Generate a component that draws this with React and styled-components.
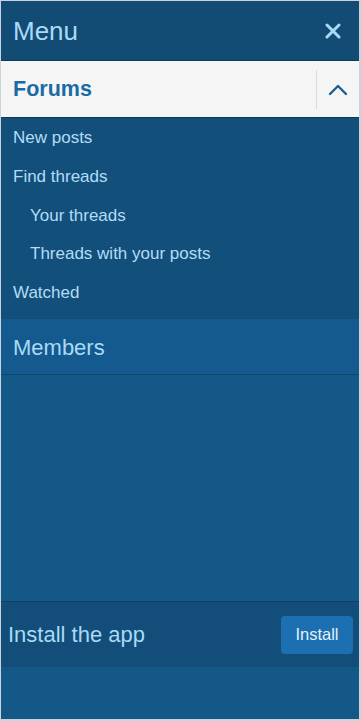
import React from "react";
import styled, { createGlobalStyle } from "styled-components";

const Global = createGlobalStyle`
  html, body { margin: 0; padding: 0; background: #c9d3dc; }
  body { font-family: "Liberation Sans", Arial, sans-serif; }
`;

const Frame = styled.div`
  box-sizing: border-box;
  width: 361px;
  height: 721px;
  border: 1px solid #c9d3dc;
  border-right-width: 2px;
  border-bottom-width: 2px;
  background: #135887;
  display: flex;
  flex-direction: column;
  overflow: hidden;
`;

const Header = styled.div`
  height: 59px;
  display: flex;
  align-items: center;
  justify-content: space-between;
  padding: 0 16px 0 12px;
  background: #124c75;
  border-bottom: 1px solid #0d3b5c;
`;

const Title = styled.div`
  color: #a9daf7;
  font-size: 26px;
  padding-top: 1px;
`;

const Close = styled.button`
  border: 0;
  background: none;
  padding: 0;
  width: 20px;
  height: 24px;
  display: flex;
  align-items: center;
  justify-content: center;
`;

const SectionHead = styled.div`
  height: 56px;
  display: flex;
  align-items: stretch;
  background: #f5f5f5;
  border-bottom: 1px solid #0d3b5c;
`;

const SectionTitle = styled.div`
  flex: 1;
  display: flex;
  align-items: center;
  padding-left: 12px;
  color: #1a6aa3;
  font-weight: bold;
  font-size: 21.5px;
`;

const Toggle = styled.div`
  width: 42px;
  margin: 9px 0 8px;
  border-left: 1px solid #d3dde6;
  display: flex;
  align-items: center;
  justify-content: center;
`;

const SubList = styled.ul`
  list-style: none;
  margin: 0;
  padding: 1px 0 7px;
  background: #124f7b;
`;

const SubItem = styled.li`
  height: 38.7px;
  display: flex;
  align-items: center;
  padding-left: ${(p) => (p.$indent ? 29 : 12)}px;
  color: #b3dcf6;
  font-size: 17px;
`;

const Section = styled.div`
  height: 56px;
  display: flex;
  align-items: center;
  padding-left: 12px;
  padding-top: 2px;
  box-sizing: border-box;
  background: #145a8e;
  border-bottom: 1px solid #0f4670;
  color: #a9daf7;
  font-size: 22px;
`;

const Body = styled.div`
  flex: 1;
  background: #135887;
  border-bottom: 1px solid #0e4166;
`;

const InstallBar = styled.div`
  height: 65px;
  display: flex;
  align-items: center;
  justify-content: space-between;
  padding: 0 6px 0 7px;
  background: #124e79;
  color: #a9daf7;
  font-size: 22px;
`;

const InstallButton = styled.button`
  width: 72px;
  height: 38px;
  border: 0;
  border-radius: 4px;
  background: #1c6fb0;
  color: #e3f1fb;
  font-family: inherit;
  font-size: 16.5px;
`;

const Bottom = styled.div`
  height: 52px;
  background: #135887;
`;

const items = [
  { label: "New posts" },
  { label: "Find threads" },
  { label: "Your threads", indent: true },
  { label: "Threads with your posts", indent: true },
  { label: "Watched" },
];

export default function App() {
  return (
    <>
      <Global />
      <Frame>
        <Header>
          <Title>Menu</Title>
          <Close aria-label="Close">
            <svg width="16" height="16" viewBox="0 0 16 16">
              <path d="M2 2 L14 14 M14 2 L2 14" stroke="#a9daf7" strokeWidth="3" strokeLinecap="round" />
            </svg>
          </Close>
        </Header>
        <SectionHead>
          <SectionTitle>Forums</SectionTitle>
          <Toggle>
            <svg width="20" height="12" viewBox="0 0 20 12">
              <path d="M2 10 L10 2 L18 10" fill="none" stroke="#1a5f91" strokeWidth="2.4" strokeLinecap="round" strokeLinejoin="round" />
            </svg>
          </Toggle>
        </SectionHead>
        <SubList>
          {items.map((it) => (
            <SubItem key={it.label} $indent={it.indent}>
              {it.label}
            </SubItem>
          ))}
        </SubList>
        <Section>Members</Section>
        <Body />
        <InstallBar>
          <span>Install the app</span>
          <InstallButton>Install</InstallButton>
        </InstallBar>
        <Bottom />
      </Frame>
    </>
  );
}
